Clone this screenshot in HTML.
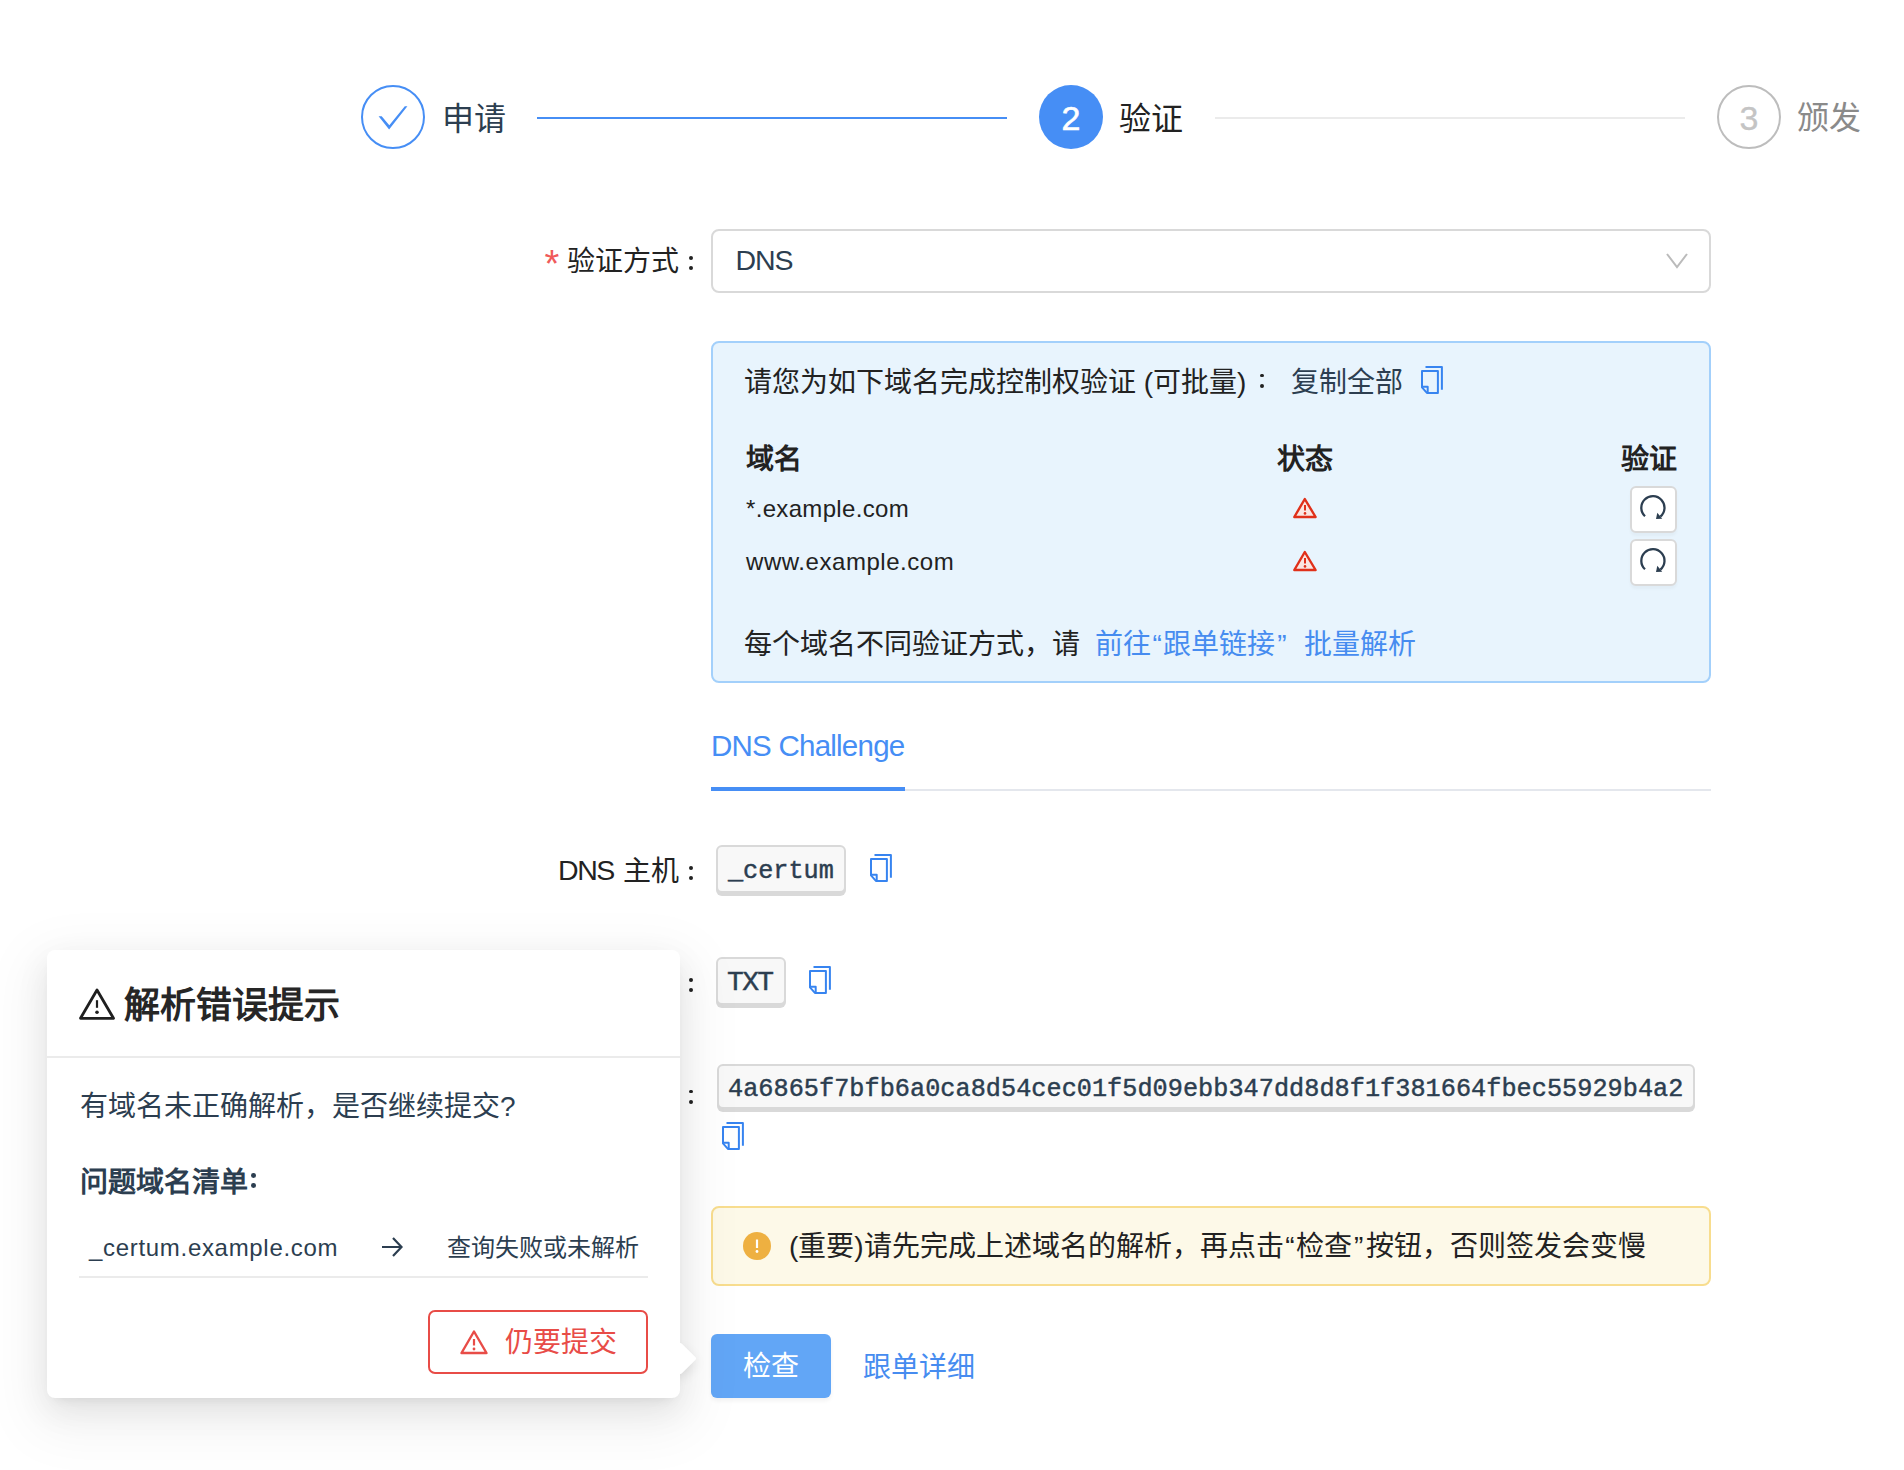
<!DOCTYPE html>
<html lang="zh-CN"><head><meta charset="utf-8">
<style>
html,body{margin:0;padding:0;background:#fff;}
body{width:1904px;height:1470px;position:relative;overflow:hidden;font-family:"Liberation Sans",sans-serif;color:#2c3e50;}
.a{position:absolute;}
.t{position:absolute;white-space:nowrap;line-height:1;}
.f28{font-size:28px;margin-top:-0.75px;}
.mono{font-family:"Liberation Mono",monospace;-webkit-text-stroke:0.45px #2c3e50;}
.blue{color:#468ef5;}
.dark{color:#222;}
.dot{width:3.9px;height:3.9px;border-radius:50%;background:#222;}
.q1{margin:0 1.5px 0 1.5px;}
.q2{margin:0 2.5px 0 2px;}
.kbd{position:absolute;box-sizing:border-box;background:#f8f8f8;border:2px solid #d9d9d9;border-radius:6px;box-shadow:0 3px 0 #d9d9d9;}
</style></head>
<body>
<!-- STEPS -->
<div class="a" style="left:361px;top:85px;width:64px;height:64px;box-sizing:border-box;border:2px solid #468ef5;border-radius:50%;"></div>
<svg class="a" style="left:361px;top:85px" width="64" height="64" viewBox="0 0 64 64"><path d="M17.6,31.3 L20.7,31.3 L28.3,40.2 L43.8,21.2 L46.4,21.2 L28.1,44.6 Z" fill="#468ef5"/></svg>
<div class="t" style="left:442px;top:103px;font-size:32px;color:#2c3e50">申请</div>
<div class="a" style="left:537px;top:117px;width:470px;height:2px;background:#468ef5"></div>
<div class="a" style="left:1039px;top:85px;width:64px;height:64px;border-radius:50%;background:#468ef5"></div>
<div class="t" style="left:1039px;top:101px;width:64px;text-align:center;font-size:34px;color:#fff;-webkit-text-stroke:0.6px #fff">2</div>
<div class="t" style="left:1119px;top:103px;font-size:32px;color:#222">验证</div>
<div class="a" style="left:1215px;top:117px;width:470px;height:2px;background:#ebebeb"></div>
<div class="a" style="left:1717px;top:85px;width:64px;height:64px;box-sizing:border-box;border:2px solid #bdbdbd;border-radius:50%;"></div>
<div class="t" style="left:1717px;top:101px;width:64px;text-align:center;font-size:34px;color:#c4c4c4;-webkit-text-stroke:0.3px #c4c4c4">3</div>
<div class="t" style="left:1797px;top:102px;font-size:32px;color:#8a8a8a">颁发</div>

<!-- FORM ROW 1 -->
<div class="t" style="left:544.5px;top:244.5px;font-size:38px;color:#f05a5a">*</div>
<div class="t f28 dark" style="left:567px;top:249px">验证方式</div><div class="a dot" style="left:688.9px;top:256px"></div><div class="a dot" style="left:688.9px;top:265.9px"></div>
<div class="a" style="left:711px;top:229px;width:1000px;height:64px;box-sizing:border-box;border:2px solid #d9d9d9;border-radius:8px;background:#fff"></div>
<div class="t f28" style="left:735.5px;top:247px;font-size:28.5px;color:#2c3e50;letter-spacing:-1.1px">DNS</div>
<svg class="a" style="left:1664px;top:250px" width="26" height="20" viewBox="0 0 26 20"><path d="M3,4 L13,17 L23,4" fill="none" stroke="#bbb" stroke-width="2"/></svg>

<!-- INFO BOX -->
<div class="a" style="left:711px;top:341px;width:1000px;height:342px;box-sizing:border-box;border:2px solid #a3d0fb;border-radius:8px;background:#e8f4fd"></div>
<div class="t f28 dark" style="left:744px;top:370px">请您为如下域名完成控制权验证 (可批量)</div><div class="a dot" style="left:1260px;top:373.6px;width:3.9px;height:3.9px"></div><div class="a dot" style="left:1260px;top:383.8px;width:3.9px;height:3.9px"></div>
<div class="t f28" style="left:1291px;top:370px;color:#2c3e50">复制全部</div>
<svg class="a cp" style="left:1421px;top:364px" width="26" height="32" viewBox="-1 -1 26 32"><g fill="none" stroke="#3784f0" stroke-width="2" stroke-linejoin="round"><path d="M3.5,2.1 H19.9 V24.7"/><path d="M0,6.1 H15.9 V27.9 H4.9 L0,22.4 Z"/><path d="M0,21.7 H5.7 V27.9"/></g></svg>

<div class="t f28 dark" style="left:746px;top:447px;font-weight:bold">域名</div>
<div class="t f28 dark" style="left:1277px;top:447px;font-weight:bold">状态</div>
<div class="t f28 dark" style="left:1621px;top:447px;font-weight:bold">验证</div>

<div class="t dark" style="left:746px;top:496.5px;font-size:24px;letter-spacing:0.33px">*.example.com</div>
<div class="t dark" style="left:746px;top:550px;font-size:24px;letter-spacing:0.55px">www.example.com</div>

<svg class="a" style="left:1288px;top:492px" width="34" height="32" viewBox="0 0 34 32"><path d="M16.8,7 L27.6,25 L6.3,25 Z" fill="#fae6e2" stroke="#e0301a" stroke-width="2.4" stroke-linejoin="round"/><path d="M17,13 V18.5" stroke="#e0301a" stroke-width="2"/><circle cx="17" cy="21.4" r="1.3" fill="#e0301a"/></svg>
<svg class="a" style="left:1288px;top:545px" width="34" height="32" viewBox="0 0 34 32"><path d="M16.8,7 L27.6,25 L6.3,25 Z" fill="#fae6e2" stroke="#e0301a" stroke-width="2.4" stroke-linejoin="round"/><path d="M17,13 V18.5" stroke="#e0301a" stroke-width="2"/><circle cx="17" cy="21.4" r="1.3" fill="#e0301a"/></svg>

<div class="a" style="left:1630px;top:486px;width:47px;height:47px;box-sizing:border-box;border:2px solid #d9d9d9;border-radius:6px;background:#fff;box-shadow:0 3px 3px rgba(0,0,0,0.03)"></div>
<svg class="a" style="left:1630px;top:486px" width="48" height="48" viewBox="0 0 48 48"><path d="M14.99,30.23 A11.6,11.6 0 1 1 30.36,30.64" fill="none" stroke="#2c3e50" stroke-width="2.3"/><path d="M27.3,26.8 L26.0,32.9 L32.2,32.8 Z" fill="#2c3e50"/></svg>
<div class="a" style="left:1630px;top:539px;width:47px;height:47px;box-sizing:border-box;border:2px solid #d9d9d9;border-radius:6px;background:#fff;box-shadow:0 3px 3px rgba(0,0,0,0.03)"></div>
<svg class="a" style="left:1630px;top:539px" width="48" height="48" viewBox="0 0 48 48"><path d="M14.99,30.23 A11.6,11.6 0 1 1 30.36,30.64" fill="none" stroke="#2c3e50" stroke-width="2.3"/><path d="M27.3,26.8 L26.0,32.9 L32.2,32.8 Z" fill="#2c3e50"/></svg>

<div class="t f28 dark" style="left:744px;top:632px">每个域名不同验证方式，请</div>
<div class="t f28" style="left:1095px;top:632px;color:#468cf0">前往<span class="q1">“</span>跟单链接<span class="q2">”</span></div>
<div class="t f28" style="left:1304px;top:632px;color:#468cf0">批量解析</div>

<!-- TABS -->
<div class="t blue" style="left:711px;top:731px;font-size:29.5px;letter-spacing:-0.76px">DNS Challenge</div>
<div class="a" style="left:711px;top:789px;width:1000px;height:2px;background:#e4e7ed"></div>
<div class="a" style="left:711px;top:787px;width:194px;height:4px;background:#468ef5"></div>

<!-- DNS HOST -->
<div class="t dark" style="left:558px;top:856.3px;font-size:28.5px;letter-spacing:-1.4px">DNS</div><div class="t f28 dark" style="left:623px;top:859px">主机</div><div class="a dot" style="left:688.9px;top:865.9px"></div><div class="a dot" style="left:688.9px;top:876.1px"></div>
<div class="kbd" style="left:716px;top:845px;width:130px;height:48px"></div>
<div class="t mono" style="left:728px;top:859px;font-size:25.2px;color:#2c3e50">_certum</div>
<svg class="a cp" style="left:870px;top:852px" width="26" height="32" viewBox="-1 -1 26 32"><g fill="none" stroke="#3784f0" stroke-width="2" stroke-linejoin="round"><path d="M3.5,2.1 H19.9 V24.7"/><path d="M0,6.1 H15.9 V27.9 H4.9 L0,22.4 Z"/><path d="M0,21.7 H5.7 V27.9"/></g></svg>

<!-- TXT -->
<div class="a dot" style="left:688.9px;top:977.7px"></div><div class="a dot" style="left:688.9px;top:987.9px"></div>
<div class="kbd" style="left:716px;top:957px;width:70px;height:48px"></div>
<div class="t mono" style="left:727px;top:969px;font-size:28px;letter-spacing:-1.66px;color:#2c3e50">TXT</div>
<svg class="a cp" style="left:809px;top:964px" width="26" height="32" viewBox="-1 -1 26 32"><g fill="none" stroke="#3784f0" stroke-width="2" stroke-linejoin="round"><path d="M3.5,2.1 H19.9 V24.7"/><path d="M0,6.1 H15.9 V27.9 H4.9 L0,22.4 Z"/><path d="M0,21.7 H5.7 V27.9"/></g></svg>

<!-- VALUE -->
<div class="a dot" style="left:688.9px;top:1089.6px"></div><div class="a dot" style="left:688.9px;top:1099.8px"></div>
<div class="kbd" style="left:717px;top:1064px;width:978px;height:45px"></div>
<div class="t mono" style="left:728px;top:1077px;font-size:25.2px;letter-spacing:0.05px;color:#2c3e50">4a6865f7bfb6a0ca8d54cec01f5d09ebb347dd8d8f1f381664fbec55929b4a2</div>
<svg class="a cp" style="left:722px;top:1120px" width="26" height="32" viewBox="-1 -1 26 32"><g fill="none" stroke="#3784f0" stroke-width="2" stroke-linejoin="round"><path d="M3.5,2.1 H19.9 V24.7"/><path d="M0,6.1 H15.9 V27.9 H4.9 L0,22.4 Z"/><path d="M0,21.7 H5.7 V27.9"/></g></svg>

<!-- ALERT -->
<div class="a" style="left:711px;top:1206px;width:1000px;height:80px;box-sizing:border-box;border:2px solid #f8dd8e;border-radius:8px;background:#fdf9e8"></div>
<div class="a" style="left:743px;top:1232px;width:28px;height:28px;border-radius:50%;background:#eeb041"></div>
<svg class="a" style="left:743px;top:1232px" width="28" height="28" viewBox="0 0 28 28"><path d="M14,7.5 V16" stroke="#fff" stroke-width="2.2"/><circle cx="14" cy="19.5" r="1.4" fill="#fff"/></svg>
<div class="t f28 dark" style="left:789px;top:1234px">(重要)请先完成上述域名的解析，再点击<span class="q1">“</span>检查<span class="q2">”</span>按钮，否则签发会变慢</div>

<!-- BUTTONS -->
<div class="a" style="left:711px;top:1334px;width:120px;height:64px;border-radius:6px;background:#62a6f6;box-shadow:0 3px 4px rgba(0,0,0,0.05)"></div>
<div class="t f28" style="left:743px;top:1354px;color:#fff">检查</div>
<div class="t f28" style="left:863px;top:1355px;color:#468cf0">跟单详细</div>

<!-- POPOVER -->
<div class="a" style="left:47px;top:950px;width:633px;height:448px;border-radius:8px;background:#fff;box-shadow:0 12px 32px 0 rgba(0,0,0,.08),0 6px 12px -8px rgba(0,0,0,.12),0 18px 56px 16px rgba(0,0,0,.05)"></div>
<div class="a" style="left:680px;top:1280px;width:100px;height:160px;overflow:hidden"><div class="a" style="left:-11.5px;top:66.5px;width:23px;height:23px;background:#fff;transform:rotate(45deg);border-radius:2px;box-shadow:3px 3px 12px rgba(0,0,0,.10)"></div></div>
<svg class="a" style="left:74px;top:982px" width="48" height="44" viewBox="0 0 48 44"><path d="M23,8 L39.5,36.3 L6.5,36.3 Z" fill="none" stroke="#1f1f1f" stroke-width="2.8" stroke-linejoin="round"/><path d="M23,18.2 V25.8" stroke="#1f1f1f" stroke-width="2.2"/><circle cx="23" cy="30.2" r="1.8" fill="#1f1f1f"/></svg>
<div class="t" style="left:124px;top:988px;font-size:36px;font-weight:bold;color:#262626">解析错误提示</div>
<div class="a" style="left:47px;top:1056px;width:633px;height:2px;background:#ebebeb"></div>
<div class="t f28" style="left:80px;top:1094px;color:#2c3e50">有域名未正确解析，是否继续提交?</div>
<div class="t f28" style="left:80px;top:1170px;font-weight:bold;color:#2c3e50">问题域名清单</div><div class="a dot" style="left:251.3px;top:1173.1px;width:4.8px;height:4.8px;background:#2c3e50"></div><div class="a dot" style="left:251.3px;top:1183.3px;width:4.8px;height:4.8px;background:#2c3e50"></div>
<div class="t" style="left:89px;top:1236px;font-size:24px;letter-spacing:0.69px;color:#2c3e50">_certum.example.com</div>
<svg class="a" style="left:378px;top:1232px" width="28" height="30" viewBox="0 0 28 30"><path d="M4,15 H23 M15,6 L23.5,15 L15,24" fill="none" stroke="#2c3e50" stroke-width="2.2"/></svg>
<div class="t" style="left:447px;top:1236px;font-size:24px;color:#2c3e50">查询失败或未解析</div>
<div class="a" style="left:79px;top:1276px;width:569px;height:2px;background:#ebebeb"></div>
<div class="a" style="left:428px;top:1310px;width:220px;height:64px;box-sizing:border-box;border:2px solid #e84c47;border-radius:7px;background:#fff"></div>
<svg class="a" style="left:456px;top:1326px" width="36" height="32" viewBox="0 0 36 32"><path d="M18,5.5 L30.5,27 L5.5,27 Z" fill="none" stroke="#e84c47" stroke-width="2.4" stroke-linejoin="round"/><path d="M18,13 V19.5" stroke="#e84c47" stroke-width="2.2"/><circle cx="18" cy="23" r="1.4" fill="#e84c47"/></svg>
<div class="t f28" style="left:505px;top:1330px;color:#e84c47">仍要提交</div>
</body></html>
